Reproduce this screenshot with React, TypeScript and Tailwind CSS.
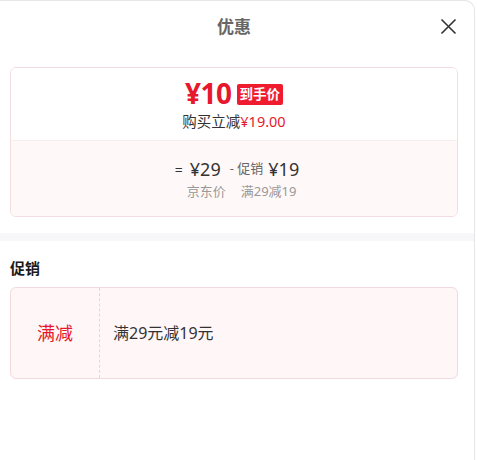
import React from 'react';

const App: React.FC = () => {
  return (
    <div
      className="w-[477px] h-[460px] bg-white overflow-hidden"
      style={{ fontFamily: '"Noto Sans", "Noto Sans CJK SC", sans-serif' }}
    >
      <div className="w-[475px] h-full border-r border-t border-[#e6e6e6] rounded-tr-[10px] bg-white">
        {/* header */}
        <div className="relative h-[52px] flex items-center justify-center pr-[6px]">
          <h1 className="text-[17px] font-bold text-[#666666]">优惠</h1>
          <button className="absolute right-[17px] top-[17px] text-[#333333]">
            <svg width="17" height="17" viewBox="0 0 17 17" fill="none" stroke="currentColor" strokeWidth="1.6">
              <path d="M1.5 1.5L15.5 15.5M15.5 1.5L1.5 15.5" />
            </svg>
          </button>
        </div>

        {/* price card */}
        <div className="ml-[10px] mr-[16px] mt-[14px] border border-[#f3dde1] rounded-[6px] overflow-hidden">
          <div className="h-[72px] flex flex-col items-center justify-center bg-white">
            <div className="flex items-center gap-[5px] h-[30px]">
              <span className="text-[#e8182c] font-bold text-[28px] leading-none tracking-[-0.5px]">¥10</span>
              <span className="bg-[#ef1b2f] text-white text-[13.5px] font-bold leading-[21px] h-[21px] px-[3px] rounded-[2px] mt-[3px]">到手价</span>
            </div>
            <div className="text-[14.5px] leading-[18px] mt-[4px] text-[#333333]">
              购买立减<span className="text-[#e8182c]">¥19.00</span>
            </div>
          </div>
          <div className="h-[76px] bg-[#fff8f8] border-t border-[#f8eeee] flex justify-center pt-[16px] pl-[6px]">
            <div className="flex items-start gap-[9px]">
              <div className="flex flex-col items-end">
                <div className="flex items-center gap-[7px] text-[#333333]">
                  <span className="text-[14px]">=</span>
                  <span className="text-[18px] leading-[24px]">¥29</span>
                </div>
                <span className="text-[13px] text-[#999999] mt-[1px] mr-[-5px]">京东价</span>
              </div>
              <div className="flex flex-col items-start">
                <div className="flex items-center gap-[5px] text-[#333333]">
                  <span className="text-[13px] text-[#666666]">- 促销</span>
                  <span className="text-[18px] leading-[24px]">¥19</span>
                </div>
                <span className="text-[13px] text-[#999999] mt-[1px] ml-[11px]">满29减19</span>
              </div>
            </div>
          </div>
        </div>

        {/* separator */}
        <div className="h-[8px] bg-[#f7f7fa] mt-[16px]" />

        {/* promotion */}
        <div className="pl-[10px] pr-[16px]">
          <h2 className="text-[15px] font-bold text-[#1a1a1a] mt-[17px] leading-[20px]">促销</h2>
          <div className="mt-[9px] h-[92px] flex border border-[#f1d9dd] rounded-[6px] bg-[#fff6f7]">
            <div className="w-[89px] flex items-center justify-center border-r border-dashed border-[#e8d5d8]">
              <span className="text-[#e8182c] text-[18px]">满减</span>
            </div>
            <div className="flex items-center pl-[13px] text-[16px] text-[#333333]">满29元减19元</div>
          </div>
        </div>
      </div>
    </div>
  );
};

export default App;
